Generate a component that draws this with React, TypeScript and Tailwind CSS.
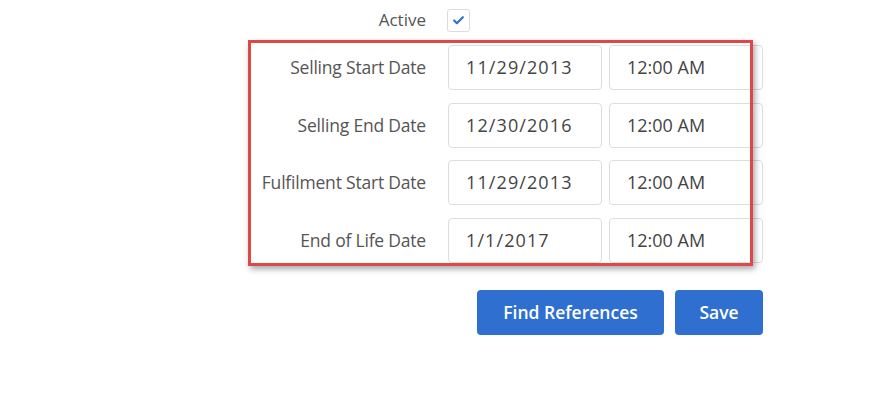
import { Check } from "lucide-react";

const rows = [
  { label: "Selling Start Date", date: "11/29/2013", time: "12:00 AM" },
  { label: "Selling End Date", date: "12/30/2016", time: "12:00 AM" },
  { label: "Fulfilment Start Date", date: "11/29/2013", time: "12:00 AM" },
  { label: "End of Life Date", date: "1/1/2017", time: "12:00 AM" },
];

export default function App() {
  return (
    <div className="relative w-[890px] h-[400px] bg-white font-['Open_Sans',sans-serif] overflow-hidden">
      <div className="flex flex-col pt-2">
        {/* Active */}
        <div className="flex items-center h-6">
          <div className="w-[426px] text-right text-[17px] text-[#555]">Active</div>
          <div className="ml-[21px] w-[23px] h-[23px] rounded-[3px] border border-[#dcdcdc] flex items-center justify-center">
            <Check className="w-[13px] h-[13px] text-[#2e6fd0]" strokeWidth={4} />
          </div>
        </div>

        {/* Date rows */}
        <div className="flex flex-col gap-[12.5px] mt-[13px]">
          {rows.map(r => (
            <div key={r.label} className="flex items-center h-[45px]">
              <div className="w-[426px] text-right text-[17.5px] text-[#555] tracking-[-0.2px]">{r.label}</div>
              <div className="ml-[22px] w-[154px] h-full rounded-[4px] border border-[#dddddd] flex items-center pl-[17px] text-[18px] tracking-[1.1px] text-[#444]">
                {r.date}
              </div>
              <div className="ml-[7px] w-[154px] h-full rounded-[4px] border border-[#dddddd] flex items-center pl-[17px] text-[18px] text-[#444]">
                {r.time}
              </div>
            </div>
          ))}
        </div>

        {/* Buttons */}
        <div className="flex gap-[11px] mt-[27px] pl-[477px]">
          <button className="w-[187px] h-[45px] rounded-[4px] bg-[#2e6fd0] text-white text-[17.5px] font-semibold">
            Find References
          </button>
          <button className="w-[88px] h-[45px] rounded-[4px] bg-[#2e6fd0] text-white text-[17.5px] font-semibold">
            Save
          </button>
        </div>
      </div>

      {/* annotation highlight */}
      <div className="absolute left-[248px] top-[40px] w-[505px] h-[226px] border-[3px] border-[#e04848] shadow-[2px_3px_6px_rgba(0,0,0,0.35)] pointer-events-none" />
    </div>
  );
}
